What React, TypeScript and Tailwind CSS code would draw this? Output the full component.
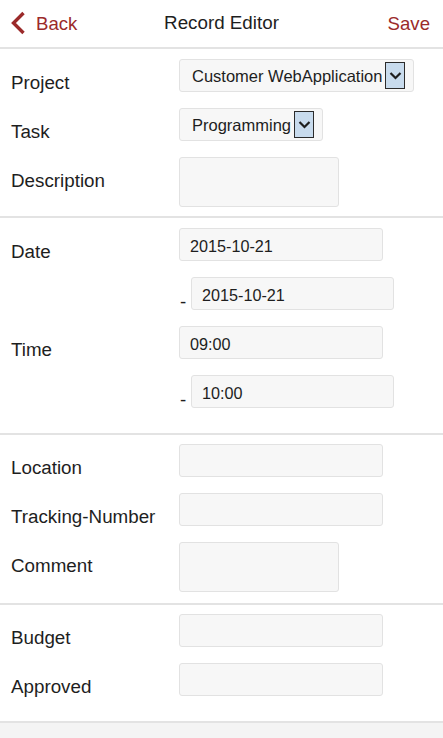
import React from "react";

const font = { fontFamily: '"Liberation Sans", Arial, sans-serif' };

function Chevron() {
  return (
    <svg width="16" height="24" viewBox="0 0 16 24" className="shrink-0">
      <path d="M13.5 2 L3.5 12 L13.5 22" fill="none" stroke="#9b2a2a" strokeWidth="3.4" />
    </svg>
  );
}

function Label({ children }: { children: React.ReactNode }) {
  return (
    <div className="w-[179px] shrink-0 pl-[11px] pt-[13px] text-[18.8px] leading-[21px] text-[#1e1e1e]">
      {children}
    </div>
  );
}

function Row({ children, tall }: { children: React.ReactNode; tall?: boolean }) {
  return <div className={`flex items-start ${tall ? "h-[50px]" : "h-[33px]"}`}>{children}</div>;
}

function Field({ value, w, h = "h-[33px]" }: { value?: string; w: string; h?: string }) {
  return (
    <div
      className={`${w} ${h} rounded-[3px] border border-[#e2e2e2] bg-[#f7f7f7] pl-[10px] pt-[4px] text-[16.2px] leading-[27px] text-[#1e1e1e]`}
    >
      {value}
    </div>
  );
}

function Select({ value }: { value: string }) {
  return (
    <div className="inline-flex h-[33px] items-center gap-[3px] rounded-[3px] border border-[#e2e2e2] bg-[#f7f7f7] pl-[12px] pr-[8px] text-[16.5px] text-[#1e1e1e]">
      <span className="pt-[2px]">{value}</span>
      <span className="flex h-[27px] w-[20px] items-center justify-center border border-[#2b2b2b] bg-[#c8dbed]">
        <svg width="13" height="9" viewBox="0 0 13 9">
          <path d="M1.5 2 L6.5 7 L11.5 2" fill="none" stroke="#1e1e1e" strokeWidth="2.2" />
        </svg>
      </span>
    </div>
  );
}

function Dash() {
  return <span className="w-[12px] shrink-0 pl-[1px] pt-[15px] text-[18.8px] leading-[20px] text-[#1e1e1e]">-</span>;
}

export default function App() {
  return (
    <div className="min-h-screen bg-[#f4f4f4]" style={font}>
      <div className="bg-white">
        {/* Header */}
        <div className="relative flex h-[49px] items-center border-b-2 border-[#e3e3e3] px-[10px]">
          <div className="flex items-center gap-[10px] text-[18.6px] text-[#9b2a2a]">
            <Chevron />
            <span>Back</span>
          </div>
          <div className="absolute left-0 right-0 text-center text-[18.8px] text-[#1e1e1e] pointer-events-none">
            Record Editor
          </div>
          <span className="ml-auto pr-[3px] text-[18.6px] text-[#9b2a2a]">Save</span>
        </div>

        {/* Section 1 */}
        <div className="flex flex-col gap-[16px] border-b-2 border-[#e3e3e3] pt-[10px] pb-[9px]">
          <Row>
            <Label>Project</Label>
            <Select value="Customer WebApplication" />
          </Row>
          <Row>
            <Label>Task</Label>
            <Select value="Programming" />
          </Row>
          <Row tall>
            <Label>Description</Label>
            <Field w="w-[160px]" h="h-[50px]" />
          </Row>
        </div>

        {/* Section 2 */}
        <div className="flex flex-col gap-[16px] border-b-2 border-[#e3e3e3] pt-[10px] pb-[25px]">
          <Row>
            <Label>Date</Label>
            <Field w="w-[204px]" value="2015-10-21" />
          </Row>
          <Row>
            <div className="w-[179px] shrink-0" />
            <Dash />
            <Field w="w-[203px]" value="2015-10-21" />
          </Row>
          <Row>
            <Label>Time</Label>
            <Field w="w-[204px]" value="09:00" />
          </Row>
          <Row>
            <div className="w-[179px] shrink-0" />
            <Dash />
            <Field w="w-[203px]" value="10:00" />
          </Row>
        </div>

        {/* Section 3 */}
        <div className="flex flex-col gap-[16px] border-b-2 border-[#e3e3e3] pt-[9px] pb-[11px]">
          <Row>
            <Label>Location</Label>
            <Field w="w-[204px]" />
          </Row>
          <Row>
            <Label>Tracking-Number</Label>
            <Field w="w-[204px]" />
          </Row>
          <Row tall>
            <Label>Comment</Label>
            <Field w="w-[160px]" h="h-[50px]" />
          </Row>
        </div>

        {/* Section 4 */}
        <div className="flex flex-col gap-[16px] border-b-2 border-[#e3e3e3] pt-[9px] pb-[25px]">
          <Row>
            <Label>Budget</Label>
            <Field w="w-[204px]" />
          </Row>
          <Row>
            <Label>Approved</Label>
            <Field w="w-[204px]" />
          </Row>
        </div>
      </div>
    </div>
  );
}
